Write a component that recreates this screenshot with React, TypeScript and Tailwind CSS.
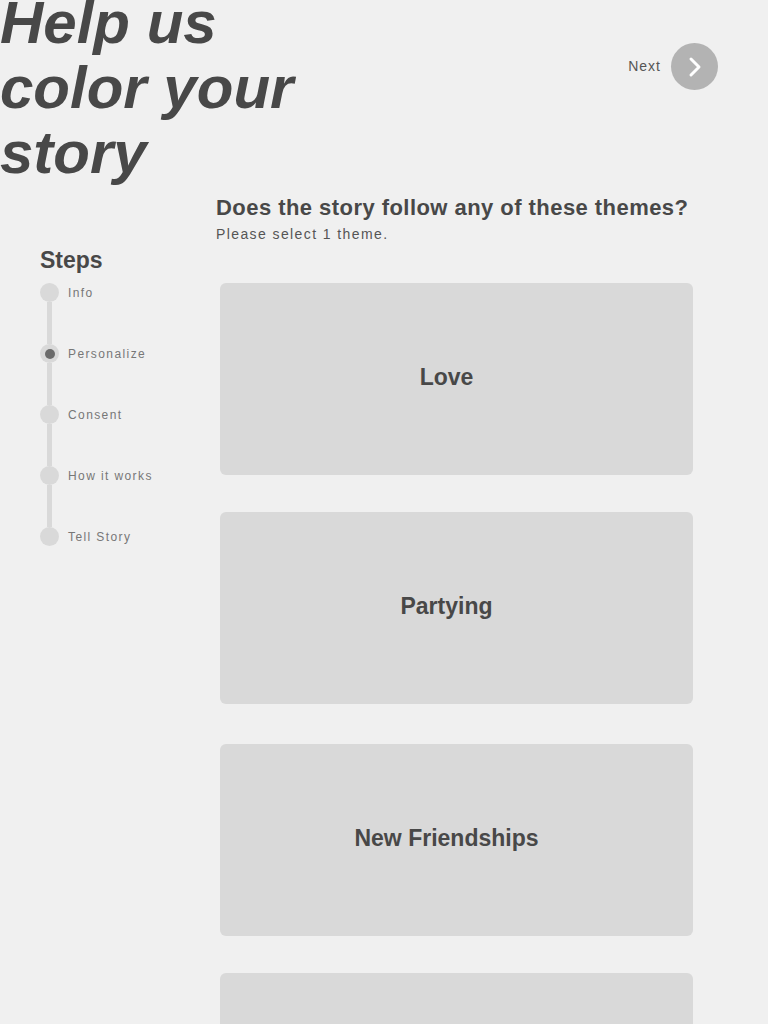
import React from "react";

const steps = ["Info", "Personalize", "Consent", "How it works", "Tell Story"];
const themes = ["Love", "Partying", "New Friendships", ""];

export default function App() {
  return (
    <div className="min-h-[1024px] w-[768px] overflow-hidden bg-[#f0f0f0] text-[#484848] font-['Liberation_Sans',Arial,sans-serif]">
      <div className="flex items-start justify-between">
        <h1 className="mt-[-10px] text-[60px] font-bold italic leading-[65px]">
          Help us
          <br />
          color your
          <br />
          story
        </h1>
        <div className="mr-[50px] mt-[43px] flex items-center gap-[10px]">
          <span className="text-[14px] tracking-[1px] text-[#555]">Next</span>
          <div className="flex h-[47px] w-[47px] items-center justify-center rounded-full bg-[#b3b3b3]">
            <svg width="14" height="22" viewBox="0 0 14 22" fill="none">
              <path d="M3 3 L11 11 L3 19" stroke="white" strokeWidth="3" strokeLinecap="round" strokeLinejoin="round" />
            </svg>
          </div>
        </div>
      </div>

      <div className="flex">
        <aside className="w-[216px] shrink-0 pl-[40px] pt-[62px]">
          <h2 className="text-[23px] font-bold leading-[26px]">Steps</h2>
          <div className="mt-[10px] flex flex-col">
            {steps.map((s, i) => (
              <div key={s} className="flex flex-col">
                <div className="flex items-center gap-[9px]">
                  <div className="flex h-[19px] w-[19px] items-center justify-center rounded-full bg-[#d9d9d9]">
                    {i === 1 && <div className="h-[10px] w-[10px] rounded-full bg-[#6b6b6b]" />}
                  </div>
                  <span className="text-[12px] tracking-[1.4px] text-[#777]">{s}</span>
                </div>
                {i < steps.length - 1 && <div className="ml-[7px] h-[42px] w-[5px] bg-[#d9d9d9]" />}
              </div>
            ))}
          </div>
        </aside>

        <main className="flex-1 pt-[10px]">
          <h3 className="text-[22px] font-bold leading-[26px] tracking-[0.45px]">Does the story follow any of these themes?</h3>
          <p className="mt-[3px] text-[14px] tracking-[1.4px] text-[#555]">Please select 1 theme.</p>
          <div className="ml-[4px] mt-[38px] flex w-[473px] flex-col">
            {themes.map((t, i) => (
              <div
                key={i}
                className={`flex h-[192px] items-center justify-center rounded-[6px] bg-[#d9d9d9] pb-[4px] pr-[20px] ${i === 0 ? "" : i === 2 ? "mt-[40px]" : "mt-[37px]"}`}
              >
                <span className="text-[23px] font-bold">{t}</span>
              </div>
            ))}
          </div>
        </main>
      </div>
    </div>
  );
}
